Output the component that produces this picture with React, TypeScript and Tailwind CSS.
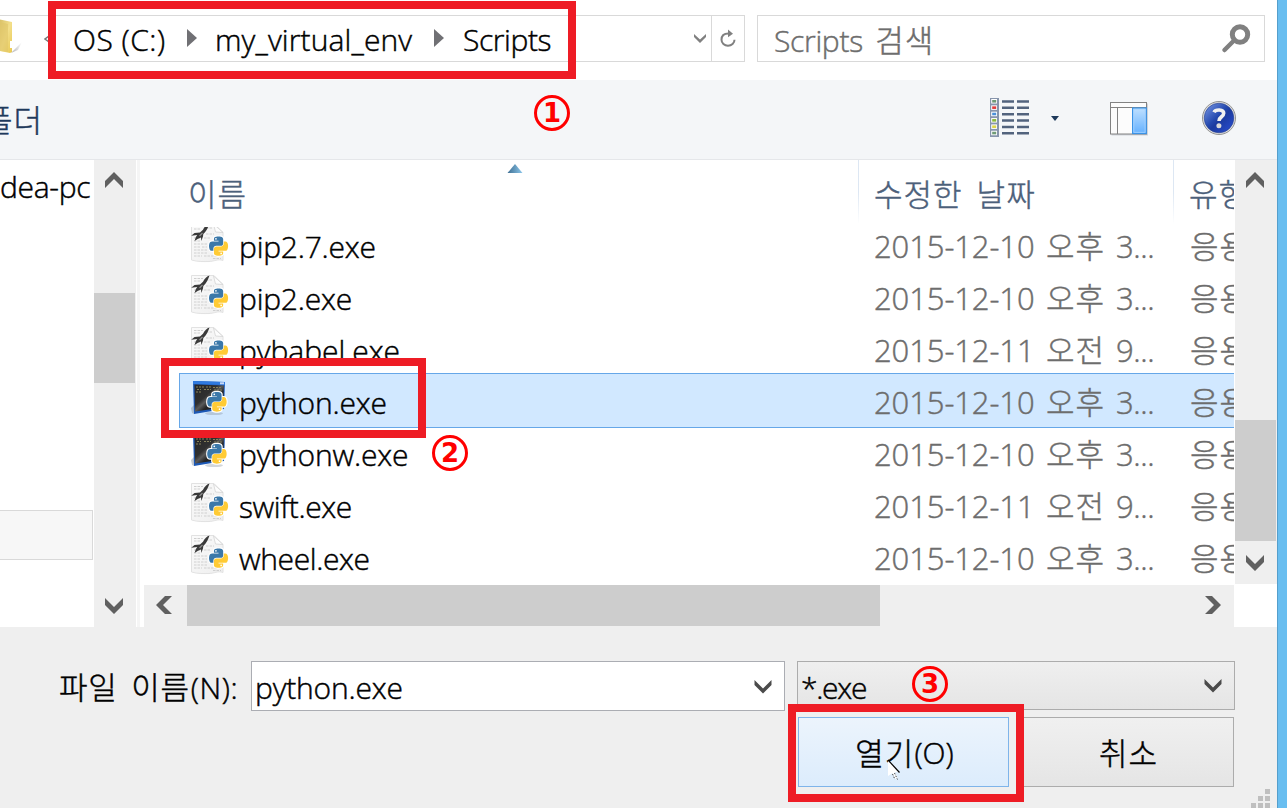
import type { ReactNode } from "react";

type FileKind = "script" | "console";

interface FileRow {
  name: string;
  track: string;
  kind: FileKind;
  date: string;
  ampm: string;
  hour: string;
  selected?: boolean;
}

const files: FileRow[] = [
  { name: "pip2.7.exe", track: "tracking-[-0.22px]", kind: "script", date: "2015-12-10", ampm: "오후", hour: "3..." },
  { name: "pip2.exe", track: "tracking-[-0.22px]", kind: "script", date: "2015-12-10", ampm: "오후", hour: "3..." },
  { name: "pybabel.exe", track: "tracking-[-0.05px]", kind: "script", date: "2015-12-11", ampm: "오전", hour: "9..." },
  { name: "python.exe", track: "tracking-[-0.2px]", kind: "console", date: "2015-12-10", ampm: "오후", hour: "3...", selected: true },
  { name: "pythonw.exe", track: "tracking-[-0.2px]", kind: "console", date: "2015-12-10", ampm: "오후", hour: "3..." },
  { name: "swift.exe", track: "tracking-[-0.4px]", kind: "script", date: "2015-12-11", ampm: "오전", hour: "9..." },
  { name: "wheel.exe", track: "tracking-[-0.4px]", kind: "script", date: "2015-12-10", ampm: "오후", hour: "3..." },
];

const BLUE_SNAKE =
  "M54.92 0C50.34.02 45.96.41 42.11 1.09 30.76 3.1 28.7 7.3 28.7 15.03V25.25H55.51V28.66H18.64C10.85 28.66 4.02 33.34 1.89 42.25c-2.46 10.21-2.57 16.58 0 27.25C3.8 77.44 8.35 83.09 16.14 83.09H25.36V70.84C25.36 61.99 33.01 54.19 42.11 54.19H68.89C76.34 54.19 82.29 48.05 82.29 40.56V15.03C82.29 7.76 76.16 2.3 68.89 1.09 64.28.33 59.5-.02 54.92 0z";
const YELLOW_SNAKE =
  "M85.64 28.66V40.56C85.64 49.79 77.81 57.56 68.89 57.56H42.11C34.77 57.56 28.7 63.84 28.7 71.19V96.72C28.7 103.99 35.02 108.26 42.11 110.34 50.6 112.84 58.74 113.29 68.89 110.34 75.64 108.39 82.29 104.46 82.29 96.72V86.5H55.51V83.09H95.7C103.49 83.09 106.39 77.66 109.1 69.5 111.9 61.11 111.78 53.04 109.1 42.25 107.18 34.49 103.5 28.66 95.7 28.66z";

function PythonLogo({ place }: { place: string }) {
  return (
    <g transform={place}>
      <g fill="#fff" stroke="#fff" strokeWidth="13" strokeLinejoin="round">
        <path d={BLUE_SNAKE} />
        <path d={YELLOW_SNAKE} />
      </g>
      <path d={BLUE_SNAKE} fill="#3b78a9" />
      <path d={YELLOW_SNAKE} fill="#ffcb35" />
      <circle cx="40.400" cy="13.300" r="5" fill="#fff" />
      <circle cx="70.600" cy="98.400" r="5" fill="#fff" />
    </g>
  );
}

function ScriptIcon() {
  return (
    <svg width="40" height="40" viewBox="0 0 40 40" className="shrink-0">
      <defs>
        <linearGradient id="paper" x1="0" y1="0" x2="1" y2="1">
          <stop offset="0" stopColor="#fbfbfb" />
          <stop offset="1" stopColor="#eeeeee" />
        </linearGradient>
      </defs>
      <path d="M.5.5H23l9 9v28c-5-2-9 1-14 1S7 39 .5 37z" fill="url(#paper)" stroke="#e2e2e2" />
      <path d="M3 3.500h9M3 6h6M15 5h7M3 15h6M15 11h8M3 18h7M13 15h6M3 21h13M3 24h6M11 24h5M3 27h13M3 30h13M3 33h8M13 33h17M22 35.500h8" stroke="#cfcfcf" strokeWidth="1.200" strokeDasharray="2.500 1" fill="none" />
      <path d="M22.500 1l2 8 7.500.5z" fill="#fdfdfd" stroke="#d4d4d4" strokeWidth=".8" />
      <path d="M18.500.5c-2.500.7-5 3-6.500 6.300L9 9.500 3.500 10 .2 12.800l6-.8-1.400 2.300L3.500 18l3.500-2.200 3-1.300.3 3.500 1.700-4.500.3-2.500C15.500 8 17 4.500 18.500.5z" fill="#3a3a3a" />
      <path d="M8.500 13l3-3" stroke="#8d8d8d" strokeWidth="1.200" />
      <PythonLogo place="translate(18 13.500) scale(.172)" />
    </svg>
  );
}

function ConsoleIcon() {
  return (
    <svg width="40" height="40" viewBox="0 0 40 40" className="shrink-0">
      <defs>
        <linearGradient id="screen" x1="0" y1="0" x2="1" y2="1">
          <stop offset="0" stopColor="#262626" />
          <stop offset="0.400" stopColor="#303030" />
          <stop offset="0.500" stopColor="#5a5a5a" />
          <stop offset="0.620" stopColor="#262626" />
          <stop offset="1" stopColor="#151515" />
        </linearGradient>
      </defs>
      <ellipse cx="23" cy="34.500" rx="9" ry="1.600" fill="#7d8a99" opacity="0.350" />
      <path d="M0 29l3-3v9l-2-1z" fill="#8a98a8" opacity="0.500" />
      <path d="M2 2l32 1-1 27L3 35z" fill="#1c58b5" />
      <path d="M2 2l32 1v3L2 5z" fill="#2f7ae0" />
      <path d="M3.500 5.500L33 6.500l-1 22L4 32.500z" fill="url(#screen)" />
      <path d="M5 8h8M15 8h5M22 8.500h9M6 10.500h4M13 10.500h7M23 11h8M5 13h6" stroke="#87815a" strokeWidth="1" strokeDasharray="2 1" />
      <path d="M29 3.300h4v2h-4z" fill="#c9d9f4" />
      <PythonLogo place="translate(16.200 13) scale(.175)" />
    </svg>
  );
}

function Chevron({ dir }: { dir: "up" | "down" | "left" | "right" }) {
  const rotation = { up: 0, right: 90, down: 180, left: 270 }[dir];
  return (
    <svg width="18" height="18" viewBox="0 0 18 18" className="shrink-0">
      <path d="M0 10L9 1l9 9v7L9 8l-9 9z" fill="#606060" transform={`rotate(${rotation} 9 9)`} />
    </svg>
  );
}

function ComboArrow() {
  return (
    <svg width="18" height="14" viewBox="0 0 18 14" className="shrink-0">
      <path d="M.5 0L9 8.500 17.500 0v5L9 13.500.5 5z" fill="#4b4b4b" />
    </svg>
  );
}

function CrumbArrow() {
  return (
    <svg width="10" height="18" viewBox="0 0 10 18" className="shrink-0">
      <path d="M0 0l10 9-10 9z" fill="#707074" />
    </svg>
  );
}

function Badge({ children, place }: { children: ReactNode; place: string }) {
  return (
    <div className={`absolute flex size-9 items-center justify-center rounded-full border-[3px] border-[#ff0000] font-['DejaVu_Sans',sans-serif] text-[26px] leading-[28px] font-bold text-[#ff0000] [-webkit-text-stroke:0px] ${place}`}>
      {children}
    </div>
  );
}

function AddressRow() {
  return (
    <div className="flex h-20 shrink-0 bg-white pt-[15px]">
      <div className="flex h-[47px] w-[745px] border-y border-r border-[#d9d9d9]">
        <svg width="24" height="44" viewBox="0 0 24 44" className="shrink-0">
          <defs>
            <linearGradient id="folder" x1="0" y1="0" x2="1" y2="1">
              <stop offset="0" stopColor="#d9c169" />
              <stop offset="0.500" stopColor="#f3df8b" />
              <stop offset="1" stopColor="#e8c850" />
            </linearGradient>
            <linearGradient id="shade" x1="0" y1="0" x2="1" y2="0">
              <stop offset="0" stopColor="#8a8a8a" />
              <stop offset="1" stopColor="#fff" />
            </linearGradient>
          </defs>
          <path d="M11 37l11-11-4 8-7 3z" fill="url(#shade)" opacity="0.700" />
          <path d="M0 3.500l12 2.500v30l-2 1-10-2z" fill="url(#folder)" />
          <path d="M0 6l8 2v28l-8-1z" fill="#dfc467" opacity="0.600" />
          <path d="M11 25v7" stroke="#fff" strokeWidth="2" />
        </svg>
        <div className="flex grow items-start pt-[9px] text-[30px] leading-[30px]">
          <svg width="6" height="8" viewBox="0 0 6 8" className="mt-[10px] ml-[20px] shrink-0">
            <path d="M5 1L1 4l4 3" fill="none" stroke="#777" strokeWidth="1.500" />
          </svg>
          <span className="ml-[23px] w-[114px] tracking-[0.5px]">OS (C:)</span>
          <span className="mt-1"><CrumbArrow /></span>
          <span className="ml-[18px] w-[219px] tracking-[0.12px]">my_virtual_env</span>
          <span className="mt-1"><CrumbArrow /></span>
          <span className="ml-[19px] tracking-[-0.4px]">Scripts</span>
        </div>
        <svg width="12" height="11" viewBox="0 0 12 11" className="mt-[17px] mr-[5px] shrink-0">
          <path d="M0 1l6 5.500L12 1v3L6 10 0 4z" fill="#808080" />
        </svg>
        <div className="flex w-[33px] items-start justify-center border-l border-[#d9d9d9] pt-[13px]">
          <svg width="18" height="20" viewBox="0 0 18 20">
            <path d="M9.500 4.500C5 4.500 2.500 7 2.500 10.800a6.500 6 0 0 0 13 0" fill="none" stroke="#808080" strokeWidth="2" />
            <path d="M9 .500l5 4.300-5 3.400z" fill="#808080" />
          </svg>
        </div>
      </div>
      <div className="ml-3 flex h-[47px] w-[508px] items-start justify-between border border-[#d9d9d9] pr-[13px] pl-[16px] text-[30px] leading-[30px] text-[#6d6d6d]">
        <span className="pt-[9px] tracking-[-0.3px] [word-spacing:5px]">Scripts <span className="text-[31px] font-light tracking-[1px]">검색</span></span>
        <svg width="30" height="30" viewBox="0 0 30 30" className="mt-2">
          <circle cx="19" cy="10.500" r="7.700" fill="none" stroke="#808080" strokeWidth="5" />
          <path d="M13.500 16L3.500 26" stroke="#808080" strokeWidth="4.500" strokeLinecap="round" />
        </svg>
      </div>
    </div>
  );
}

function Toolbar() {
  const marks = ["#6f9b76", "#e03c3c", "#4a90d9", "#8ab83c", "#dcd54a", "#6f9b76"];
  return (
    <div className="flex h-20 shrink-0 items-start border-b border-[#e5e7ea] bg-[#f4f6f8]">
      <div className="flex w-[43px] justify-end overflow-hidden pt-[25px] text-[31px] leading-[30px] font-light whitespace-nowrap text-[#1e395b]">
        <span className="tracking-[1px]">폴더</span>
      </div>
      <svg width="40" height="40" viewBox="0 0 40 40" className="mt-[18px] ml-[947px]">
        <rect x="0" y="0" width="9" height="39" fill="#8795ac" />
        {marks.map((color, i) => (
          <g key={i}>
            <rect x="1.200" y={1 + i * 6.35} width="5.800" height="4.500" fill="#fff" />
            <rect x="2.200" y={2 + i * 6.35} width="4" height="2.600" fill={color} />
            <path d={`M12 ${3.5 + i * 6.35}h12M27 ${3.5 + i * 6.35}h12`} stroke="#52637d" strokeWidth="2.500" />
          </g>
        ))}
      </svg>
      <svg width="8" height="5" viewBox="0 0 8 5" className="mt-9 ml-[21px]">
        <path d="M0 0h8L4 5z" fill="#1e395b" />
      </svg>
      <svg width="39" height="34" viewBox="0 0 39 34" className="mt-[22px] ml-[51px]">
        <defs>
          <linearGradient id="pane" x1="0" y1="0" x2="0" y2="1">
            <stop offset="0" stopColor="#bfe0ff" />
            <stop offset="1" stopColor="#65b1ff" />
          </linearGradient>
        </defs>
        <rect x="1.500" y="1.500" width="36.500" height="32" fill="#cfd3d9" />
        <rect x=".5" y=".5" width="36" height="31.500" fill="#fcfcfc" stroke="#828282" />
        <path d="M1 5.500h36M7.500 6v26" stroke="#828282" />
        <rect x="22.600" y="6" width="13.700" height="25.500" fill="url(#pane)" stroke="#3b93e6" strokeWidth="1.200" />
        <rect x="23.800" y="7.300" width="11.300" height="23" fill="none" stroke="#a9d4ff" strokeWidth=".8" />
      </svg>
      <svg width="36" height="36" viewBox="0 0 36 36" className="mt-5 ml-[52px]">
        <defs>
          <linearGradient id="help" x1="0" y1="0" x2="1" y2="1">
            <stop offset="0" stopColor="#7d9ce8" />
            <stop offset="0.450" stopColor="#2448ae" />
            <stop offset="0.550" stopColor="#1c3b9f" />
            <stop offset="1" stopColor="#2a4fd6" />
          </linearGradient>
        </defs>
        <circle cx="18" cy="18" r="16.500" fill="#dcdcdc" stroke="#949494" strokeWidth="1" />
        <circle cx="18" cy="18" r="14.800" fill="url(#help)" stroke="#27408f" strokeWidth=".6" />
        <path d="M13 12.300c1.500-3 9.700-3.300 9.700 1 0 3.700-4.700 3.300-4.700 7.700" fill="none" stroke="#f0f0f0" strokeWidth="3.600" />
        <circle cx="17.900" cy="25.700" r="2.500" fill="#d9d9d9" />
      </svg>
    </div>
  );
}

function NavigationPane() {
  return (
    <div className="flex w-[140px] shrink-0">
      <div className="flex w-[94px] flex-col overflow-hidden bg-white">
        <div className="w-[93px] overflow-hidden pt-[10px] pb-[2px] text-[30px] leading-[34px] tracking-[-0.3px] whitespace-nowrap">dea-pc</div>
        <div className="mt-[304px] h-[50px] w-[93px] border-y border-r border-[#d9d9d9] bg-[#f7f7f7]" />
      </div>
      <div className="flex w-[42px] flex-col items-center bg-[#efefef]">
        <span className="mt-[11px] mr-[2px]"><Chevron dir="up" /></span>
        <div className="mt-[104px] mr-px h-[90px] w-[41px] bg-[#cdcdcd]" />
        <span className="mt-[214px] mr-[2px]"><Chevron dir="down" /></span>
      </div>
      <div className="ml-px w-[3px] bg-[#f5f5f5]" />
    </div>
  );
}

function ListHeader() {
  return (
    <div className="flex h-[67px] shrink-0 pl-[37px] text-[31px] leading-[30px] font-light tracking-[1px] [word-spacing:5px] whitespace-nowrap text-[#4c607a]">
      <div className="relative w-[681px] shrink-0 pt-[19px] pl-[11px]">
        이름
        <svg width="16" height="10" viewBox="0 0 16 10" className="absolute top-[4px] left-[330px]">
          <defs>
            <linearGradient id="sort" x1="0" y1="0" x2="1" y2="0">
              <stop offset="0" stopColor="#3e6f93" />
              <stop offset="1" stopColor="#8cc6ea" />
            </linearGradient>
          </defs>
          <path d="M8 0l7.500 9H.5z" fill="url(#sort)" />
        </svg>
      </div>
      <div className="h-[64px] w-px shrink-0 bg-gradient-to-b from-[#dde7f3] via-[#dde7f3] to-white" />
      <div className="w-[314px] shrink-0 pt-[19px] pl-[15px]">수정한 날짜</div>
      <div className="h-[64px] w-px shrink-0 bg-gradient-to-b from-[#dde7f3] via-[#dde7f3] to-white" />
      <div className="grow overflow-hidden pt-[19px] pl-[15px]">유형</div>
    </div>
  );
}

function ListRow({ file }: { file: FileRow }) {
  const frame = file.selected
    ? "-mt-px -mb-[2px] h-[55px] border-y border-l border-[#66a7e8] bg-[#d1e8ff] pl-[11px]"
    : "h-[52px] pl-3";
  return (
    <div className={`flex shrink-0 items-start overflow-hidden whitespace-nowrap ${frame}`}>
      <span className="mt-[5px] w-12 shrink-0">{file.kind === "script" ? <ScriptIcon /> : <ConsoleIcon />}</span>
      <span className={`w-[635px] shrink-0 pt-[14px] text-[30px] leading-[30px] ${file.track}`}>{file.name}</span>
      <span className="flex w-[316px] shrink-0 pt-[13px] text-[31px] leading-[30px] text-[#6d6d6d]">
        <span className="w-[172px] tracking-[-0.1px]">{file.date}</span>
        <span className="w-[70px] font-light tracking-[1px]">{file.ampm}</span>
        <span className="tracking-[-0.4px]">{file.hour}</span>
      </span>
      <span className="pt-[13px] text-[31px] leading-[30px] font-light tracking-[1px] text-[#6d6d6d]">응용</span>
    </div>
  );
}

function FileList() {
  return (
    <div className="flex w-[1137px] flex-col bg-white">
      <div className="flex h-[425px]">
        <div className="flex w-[1094px] flex-col overflow-hidden">
          <ListHeader />
          <div className="overflow-hidden pl-[39px]">
            <div className="-mt-[9px] flex flex-col">
              {files.map((file) => (
                <ListRow key={file.name} file={file} />
              ))}
            </div>
          </div>
        </div>
        <div className="ml-px flex h-[424px] w-[42px] flex-col items-center bg-[#efefef]">
          <span className="mt-[11px] mr-[2px]"><Chevron dir="up" /></span>
          <div className="mt-[231px] mr-px h-[121px] w-[41px] bg-[#cdcdcd]" />
          <span className="mt-[13px] mr-[2px]"><Chevron dir="down" /></span>
        </div>
      </div>
      <div className="ml-1 flex h-[42px] w-[1090px] items-start bg-[#efefef]">
        <span className="mt-[11px] ml-[11px]"><Chevron dir="left" /></span>
        <div className="ml-[14px] h-[41px] w-[693px] bg-[#cdcdcd]" />
        <span className="mt-[11px] ml-[324px]"><Chevron dir="right" /></span>
      </div>
    </div>
  );
}

function Footer() {
  return (
    <div className="flex h-[181px] shrink-0 flex-col bg-[#efefef] pt-[34px] whitespace-nowrap">
      <div className="flex h-[50px] items-start text-[30px] leading-[30px]">
        <div className="w-[251px] pt-[11px] pl-[59px]">
          <span className="text-[31px] font-light tracking-[0.7px] [word-spacing:5px]">파일 이름</span>
          <span className="pl-px tracking-[0.6px]">(N):</span>
        </div>
        <div className="flex h-[50px] w-[534px] items-start justify-between border border-[#abadb3] bg-white pr-[12px] pl-[3px]">
          <span className="pt-[11px] tracking-[-0.2px]">python.exe</span>
          <span className="pt-[18px]"><ComboArrow /></span>
        </div>
        <div className="ml-3 flex h-[49px] w-[438px] items-start justify-between border border-[#acacac] bg-gradient-to-b from-[#efefef] to-[#e5e5e5] pr-[12px] pl-[3px]">
          <span className="pt-[11px] tracking-[-1.300px]">*.exe</span>
          <span className="pt-[17px]"><ComboArrow /></span>
        </div>
      </div>
      <div className="mt-[6px] flex h-[70px] pl-[798px] text-[30px] leading-[30px]">
        <button className="flex h-[70px] w-[211px] items-start justify-center border border-[#7eb4ea] bg-gradient-to-b from-[#ecf4fc] to-[#dcecfc] pt-[20px] pl-[2px]">
          <span className="text-[31px] font-light tracking-[1px]">열기</span>
          <span>(O)</span>
        </button>
        <button className="ml-3 flex h-[70px] w-[213px] items-start justify-center border border-[#acacac] bg-gradient-to-b from-[#f0f0f0] to-[#e5e5e5] pt-[20px] pl-[2px] text-[31px] font-light tracking-[1px]">취소</button>
      </div>
      <svg width="20" height="19" viewBox="0 0 20 19" className="mt-[2px] ml-[1251px] shrink-0">
        <path d="M14 0h5v5h-5zM7 7h5v5H7zM14 7h5v5h-5zM0 14h5v5H0zM7 14h5v5H7zM14 14h5v5h-5z" fill="#bfbfbf" />
      </svg>
    </div>
  );
}

export default function App() {
  return (
    <div className="relative flex h-[808px] w-[1287px] overflow-hidden bg-white font-['Open_Sans','Noto_Sans_CJK_KR',sans-serif] font-light text-black [-webkit-text-stroke:0.45px]">
      <div className="flex w-[1277px] shrink-0 flex-col">
        <AddressRow />
        <Toolbar />
        <div className="flex h-[467px] shrink-0">
          <NavigationPane />
          <FileList />
        </div>
        <Footer />
      </div>
      <div className="w-[10px] border-l border-[#559fcc] bg-[#69bef0]" />

      <div className="absolute top-px left-12 h-[78px] w-[528px] border-8 border-[#ee1c25]" />
      <div className="absolute top-[358px] left-[161px] h-20 w-[265px] border-8 border-[#ee1c25]" />
      <div className="absolute top-[704px] left-[788px] h-[98px] w-[236px] border-8 border-[#ee1c25]" />
      <Badge place="top-[95px] left-[534px]">1</Badge>
      <Badge place="top-[435px] left-[432px]">2</Badge>
      <Badge place="top-[666px] left-[912px]">3</Badge>
      <svg width="14" height="22" viewBox="0 0 14 22" className="absolute top-[759px] left-[887px]">
        <path d="M1 1l11 12H7.500l3 6-2 1-3-6L1 17z" fill="#fff" />
        <path d="M1 1l11.500 12.500" stroke="#000" strokeWidth="1.200" />
        <path d="M7.500 14l3 6.500M5.500 15l2.500 5.500" stroke="#444" strokeDasharray="1.500 1.500" />
      </svg>
    </div>
  );
}
